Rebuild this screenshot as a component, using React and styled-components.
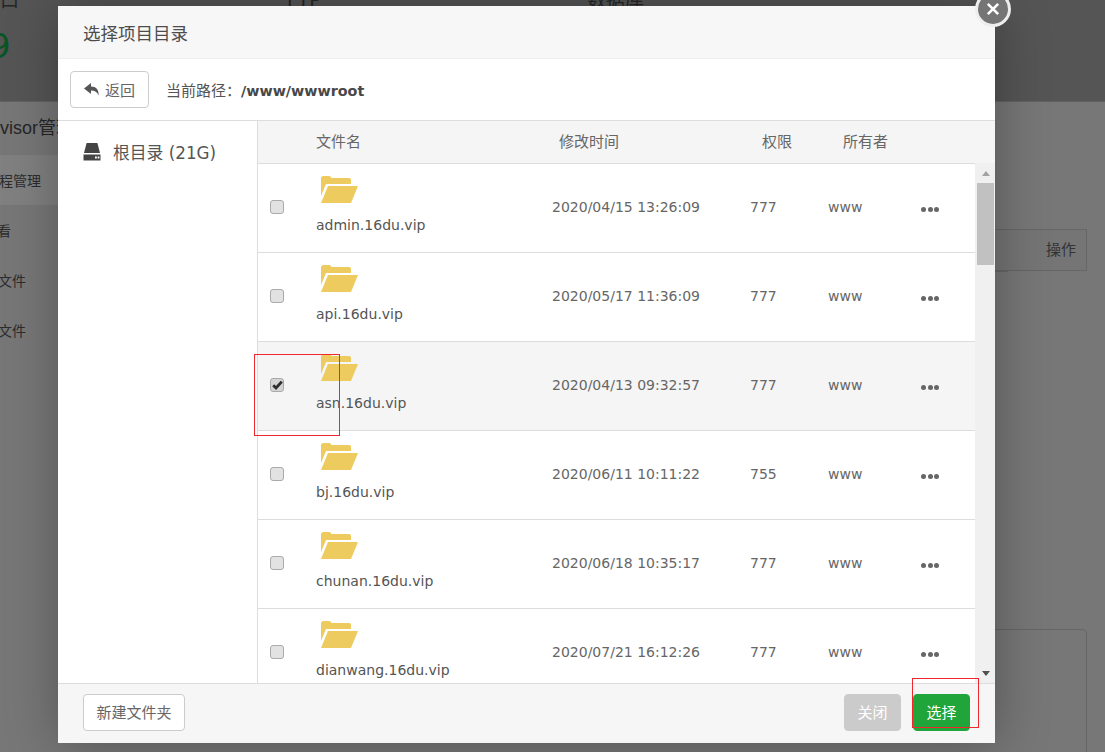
import React from "react";
import styled, { createGlobalStyle } from "styled-components";

const GlobalStyle = createGlobalStyle`
  html, body {
    margin: 0;
    height: 100%;
    overflow: hidden;
    background-color: #777;
  }
  *, *:before, *:after {
    box-sizing: border-box;
  }
  body {
    font-family: "DejaVu Sans", "Noto Sans CJK SC", sans-serif;
    color: #555;
  }
`;

const Page = styled.div`
  height: 752px;
  overflow: hidden;
  position: relative;
`;

const TopStrip = styled.div`
  height: 102px;
  background-color: #555;
  display: flex;
  overflow: hidden;
  border-bottom: 1px solid #626262;
`;

const Stat = styled.div`
  width: ${props => props.width}px;
  margin-top: -9px;
  color: #262626;
  font-size: 19px;
  line-height: 18px;
`;

const StatValue = styled.div`
  font-size: 34px;
  line-height: 44px;
  margin: 15px 0 0 -11px;
  color: #0a5526;
`;

const Lower = styled.div`
  display: flex;
  height: 650px;
`;

const SideMenu = styled.div`
  width: 58px;
  flex: none;
  overflow: hidden;
`;

const SideTitle = styled.div`
  height: 53px;
  margin-left: -48px;
  width: 200px;
  font-family: "Liberation Sans", "Noto Sans CJK SC", sans-serif;
  font-size: 18px;
  line-height: 52px;
  color: #262626;
  white-space: nowrap;
`;

const SideItem = styled.div`
  height: 50px;
  font-size: 14px;
  line-height: 52px;
  white-space: nowrap;
  color: #2c2c2c;
  background-color: ${props => (props.active ? "#808080" : "transparent")};
`;

const ItemText = styled.span`
  margin-left: ${props => props.shift}px;
`;

const BackRight = styled.div`
  flex: 1;
  display: flex;
  justify-content: flex-end;
  padding: 127px 18px 0 0;
`;

const BackColumn = styled.div`
  width: 92px;
`;

const BackHead = styled.div`
  height: 42px;
  border: 1px solid #666;
  border-left: none;
  background-color: #757575;
  color: #333;
  font-size: 15px;
  line-height: 40px;
  text-align: right;
  padding-right: 10px;
`;

const BackLine = styled.div`
  width: 13px;
  height: 1px;
  background-color: #666;
`;

const BackBox = styled.div`
  margin-top: 357px;
  height: 200px;
  border: 1px solid #666;
  border-left: none;
  border-radius: 0 5px 0 0;
`;

const Modal = styled.div`
  position: absolute;
  left: 58px;
  top: 6px;
  width: 937px;
  height: 737px;
  background-color: #fff;
  display: flex;
  flex-direction: column;
  box-shadow: 1px 1px 50px rgba(0, 0, 0, 0.3);
`;

const CloseButton = styled.div`
  position: absolute;
  right: -16px;
  top: -15px;
  width: 36px;
  height: 36px;
  border-radius: 50%;
  border: 3px solid #eee;
  background-color: #757575;
  display: flex;
  align-items: center;
  justify-content: center;
`;

const ModalTitle = styled.div`
  height: 53px;
  flex: none;
  background-color: #f7f7f7;
  border-bottom: 1px solid #eee;
  padding: 3px 0 0 25px;
  font-size: 17.5px;
  line-height: 50px;
  color: #4d4d4d;
`;

const Toolbar = styled.div`
  height: 62px;
  flex: none;
  display: flex;
  align-items: center;
  padding: 0 12px;
  border-bottom: 1px solid #ddd;
`;

const Button = styled.div`
  height: 37px;
  width: ${props => props.width}px;
  display: flex;
  align-items: center;
  justify-content: center;
  gap: 6px;
  border-radius: 4px;
  font-size: 15px;
  border: 1px solid ${props => props.border || "#ccc"};
  background-color: ${props => props.bg || "#fff"};
  color: ${props => props.color || "#666"};
`;

const FooterButton = styled(Button)`
  padding-bottom: 2px;
`;

const PathLabel = styled.div`
  margin-left: 17px;
  font-size: 15px;
  color: #555;
  b {
    color: #484848;
    font-size: 14.3px;
  }
`;

const Body = styled.div`
  flex: 1;
  min-height: 0;
  display: flex;
`;

const Sidebar = styled.div`
  width: 200px;
  flex: none;
  border-right: 1px solid #ddd;
  padding: 18px 0 0 25px;
  font-size: 16.8px;
  color: #555;
`;

const DriveRow = styled.div`
  display: flex;
  align-items: center;
  gap: 12px;
  height: 26px;
`;

const Files = styled.div`
  flex: 1;
  min-width: 0;
  display: flex;
  flex-direction: column;
`;

const HeadRow = styled.div`
  height: 43px;
  flex: none;
  display: grid;
  grid-template-columns: 58px 243px 203px 81px 1fr;
  align-items: center;
  padding-bottom: 3px;
  background-color: #f5f5f5;
  border-bottom: 1px solid #ddd;
  font-size: 15px;
  color: #666;
`;

const ListArea = styled.div`
  flex: 1;
  min-height: 0;
  display: flex;
`;

const Rows = styled.div`
  flex: 1;
  min-width: 0;
  overflow: hidden;
`;

const Row = styled.div`
  height: 89px;
  display: grid;
  grid-template-columns: 58px 236px 198px 78px 93px 1fr;
  align-items: center;
  border-bottom: 1px solid #ddd;
  font-size: 14px;
  color: #666;
  background-color: ${props => (props.selected ? "#f5f5f5" : "#fff")};
`;

const CheckCell = styled.div`
  padding-left: 12px;
  margin-top: -2px;
`;

const CheckBox = styled.div`
  width: 14px;
  height: 14px;
  border: 1px solid #aaa;
  border-radius: 3px;
  background-color: ${props => (props.checked ? "#d4d4d4" : "#e2e2e2")};
  display: flex;
  align-items: center;
  justify-content: center;
  color: #2e2e2e;
`;

const NameCell = styled.div`
  align-self: start;
  padding-top: 12px;
  display: flex;
  flex-direction: column;
  gap: 13px;
`;

const FolderWrap = styled.div`
  padding-left: 5px;
  height: 27px;
`;

const NameText = styled.div`
  line-height: 18px;
  color: #555;
`;

const TimeCell = styled.div`
  margin-top: -2px;
`;

const Dots = styled.div`
  display: flex;
  gap: 1.5px;
  margin-top: 2px;
`;

const Dot = styled.i`
  width: 5px;
  height: 5px;
  border-radius: 50%;
  background-color: #666;
`;

const ScrollTrack = styled.div`
  width: 20px;
  flex: none;
  margin-top: -1px;
  background-color: #f0f0f0;
  padding: 0 1px 0 2px;
  display: flex;
  flex-direction: column;
`;

const ScrollArrow = styled.div`
  height: 20px;
  flex: none;
  display: flex;
  align-items: center;
  justify-content: center;
  &:before {
    content: "";
    border-left: 4px solid transparent;
    border-right: 4px solid transparent;
    ${props =>
      props.down
        ? "border-top: 5px solid #505050;"
        : "border-bottom: 5px solid #a3a3a3;"}
  }
`;

const ScrollThumb = styled.div`
  height: 82px;
  flex: none;
  background-color: #c1c1c1;
`;

const ScrollSpace = styled.div`
  flex: 1;
`;

const Footer = styled.div`
  height: 60px;
  flex: none;
  display: flex;
  align-items: center;
  justify-content: space-between;
  padding: 0 25px 2px;
  background-color: #f6f6f6;
  border-top: 1px solid #ddd;
`;

const FooterRight = styled.div`
  display: flex;
  gap: 12px;
`;

const Annotation = styled.div`
  position: absolute;
  left: ${props => props.left}px;
  top: ${props => props.top}px;
  width: ${props => props.w}px;
  height: ${props => props.h}px;
  border: 1px solid #f0282d;
`;

const files = [
  { name: "admin.16du.vip", time: "2020/04/15 13:26:09", perm: "777" },
  { name: "api.16du.vip", time: "2020/05/17 11:36:09", perm: "777" },
  { name: "asn.16du.vip", time: "2020/04/13 09:32:57", perm: "777", selected: true },
  { name: "bj.16du.vip", time: "2020/06/11 10:11:22", perm: "755" },
  { name: "chunan.16du.vip", time: "2020/06/18 10:35:17", perm: "777" },
  { name: "dianwang.16du.vip", time: "2020/07/21 16:12:26", perm: "777" }
];

const menu = [
  { label: "进程管理", shift: -15, active: true },
  { label: "查看", shift: -17 },
  { label: "配置文件", shift: -30 },
  { label: "日志文件", shift: -30 }
];

const FolderIcon = () => (
  <svg width="37" height="27" viewBox="0 0 37 27" display="block">
    <path d="M0 2.5Q0 0 2.5 0H8Q10 0 10.5 2H28Q30 2 30 4V8H5L0 20Z" fill="#edcb5e" />
    <path d="M7 10H37L30 27H0Z" fill="#edcb5e" />
  </svg>
);

const BackIcon = () => (
  <svg width="15" height="13" viewBox="0 0 15 13">
    <path d="M0 5.5L7 0V3.4C12 3.4 15 6.5 14.6 12.6C13.2 9.3 11 7.6 7 7.6V11Z" fill="#555" />
  </svg>
);

const DriveIcon = () => (
  <svg width="18" height="18" viewBox="0 0 18 18">
    <path d="M3.6 0H14.4L17 10H1Z" fill="#444" />
    <path d="M0.5 11.5H17.5V17.5H0.5Z" fill="#444" />
    <rect x="12" y="13.5" width="1.8" height="2" fill="#fff" />
    <rect x="14.6" y="13.5" width="1.8" height="2" fill="#fff" />
  </svg>
);

const CheckMark = () => (
  <svg width="11" height="10" viewBox="0 0 11 10">
    <path d="M1.2 5.2L4 8L9.8 1.6" fill="none" stroke="currentColor" strokeWidth="2.8" />
  </svg>
);

const CloseIcon = () => (
  <svg width="16" height="16" viewBox="0 0 16 16">
    <path d="M2.8 2.8L13.2 13.2M13.2 2.8L2.8 13.2" stroke="#fff" strokeWidth="2.6" />
  </svg>
);

const FileRow = ({ file }) => (
  <Row selected={file.selected}>
    <CheckCell>
      <CheckBox checked={file.selected}>{file.selected && <CheckMark />}</CheckBox>
    </CheckCell>
    <NameCell>
      <FolderWrap>
        <FolderIcon />
      </FolderWrap>
      <NameText>{file.name}</NameText>
    </NameCell>
    <TimeCell>{file.time}</TimeCell>
    <TimeCell>{file.perm}</TimeCell>
    <TimeCell>www</TimeCell>
    <Dots>
      <Dot />
      <Dot />
      <Dot />
    </Dots>
  </Row>
);

export default function App() {
  return (
    <Page>
      <GlobalStyle />
      <TopStrip>
        <Stat width={287}>
          口
          <StatValue>9</StatValue>
        </Stat>
        <Stat width={300}>FTP</Stat>
        <Stat width={300}>数据库</Stat>
      </TopStrip>
      <Lower>
        <SideMenu>
          <SideTitle>Supervisor管理</SideTitle>
          {menu.map(item => (
            <SideItem key={item.label} active={item.active}>
              <ItemText shift={item.shift}>{item.label}</ItemText>
            </SideItem>
          ))}
        </SideMenu>
        <BackRight>
          <BackColumn>
            <BackHead>操作</BackHead>
            <BackLine />
            <BackBox />
          </BackColumn>
        </BackRight>
      </Lower>
      <Modal>
        <CloseButton>
          <CloseIcon />
        </CloseButton>
        <ModalTitle>选择项目目录</ModalTitle>
        <Toolbar>
          <Button width={79}>
            <BackIcon />
            返回
          </Button>
          <PathLabel>
            当前路径：<b>/www/wwwroot</b>
          </PathLabel>
        </Toolbar>
        <Body>
          <Sidebar>
            <DriveRow>
              <DriveIcon />
              <span>根目录 (21G)</span>
            </DriveRow>
          </Sidebar>
          <Files>
            <HeadRow>
              <span />
              <span>文件名</span>
              <span>修改时间</span>
              <span>权限</span>
              <span>所有者</span>
            </HeadRow>
            <ListArea>
              <Rows>
                {files.map(file => (
                  <FileRow key={file.name} file={file} />
                ))}
              </Rows>
              <ScrollTrack>
                <ScrollArrow />
                <ScrollThumb />
                <ScrollSpace />
                <ScrollArrow down />
              </ScrollTrack>
            </ListArea>
          </Files>
        </Body>
        <Footer>
          <FooterButton width={102}>新建文件夹</FooterButton>
          <FooterRight>
            <FooterButton width={57} bg="#cbcbcb" border="#cbcbcb" color="#fff">关闭</FooterButton>
            <FooterButton width={57} bg="#20a53a" border="#20a53a" color="#fff">选择</FooterButton>
          </FooterRight>
        </Footer>
      </Modal>
      <Annotation left={254} top={354} w={86} h={82} />
      <Annotation left={912} top={678} w={67} h={50} />
    </Page>
  );
}
